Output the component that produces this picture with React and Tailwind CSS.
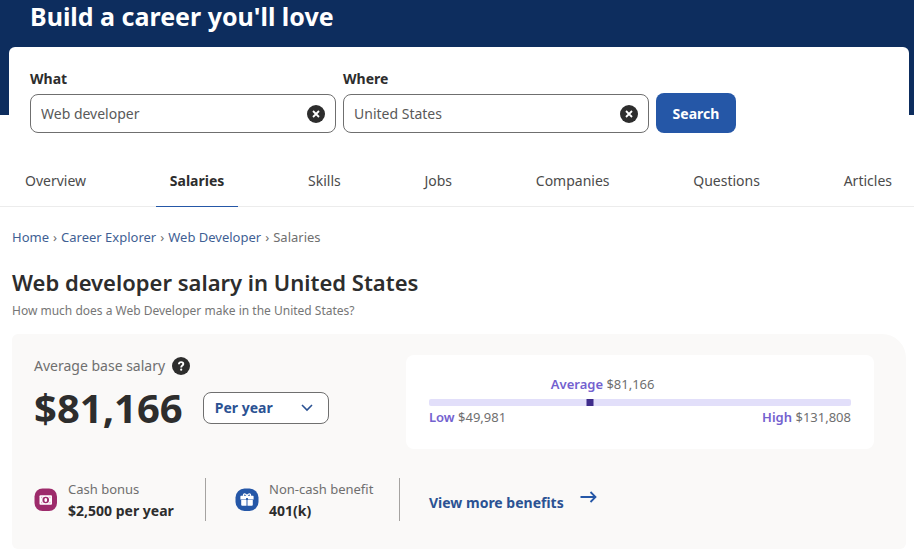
import { useState } from "react";
import clsx from "clsx";

const tabs = ["Overview", "Salaries", "Skills", "Jobs", "Companies", "Questions", "Articles"];
const crumbs = ["Home", "Career Explorer", "Web Developer"];
const range = { low: 49981, average: 81166, high: 131808 };

const money = (value) => `$${value.toLocaleString("en-US")}`;

const ClearIcon = () => (
  <svg viewBox="0 0 18 18" className="size-[18px]" aria-hidden="true">
    <circle cx="9" cy="9" r="9" fill="#2d2d2d" />
    <path d="M6 6l6 6M12 6l-6 6" stroke="#fff" strokeWidth="1.8" />
  </svg>
);

const HelpIcon = () => (
  <svg viewBox="0 0 18 18" className="size-[18px]" aria-hidden="true">
    <circle cx="9" cy="9" r="9" fill="#2d2d2d" />
    <path
      d="M6.9 7.2c0-1.3 0.9-2.1 2.2-2.1s2.2 0.8 2.2 1.9c0 1.6-2.1 1.5-2.1 3.4"
      fill="none"
      stroke="#fff"
      strokeWidth="1.9"
    />
    <circle cx="9.2" cy="12.7" r="1.1" fill="#fff" />
  </svg>
);

const CashIcon = () => (
  <svg viewBox="0 0 24 24" className="size-6 shrink-0" aria-hidden="true">
    <rect x="0.5" y="0.5" width="22.5" height="22.5" rx="8" fill="#9d2b6b" />
    <rect x="5.5" y="7.3" width="12.5" height="9.4" rx="1" fill="#fff" />
    <path d="M7 8.8h2L7 10.6zM16.5 8.8h-2l2 1.8zM7 15.2h2l-2-1.8zM16.5 15.2h-2l2-1.8z" fill="#d9a9c4" />
    <circle cx="11.75" cy="12" r="3.3" fill="#9d2b6b" />
    <ellipse cx="11.75" cy="12" rx="1.4" ry="1.9" fill="#fff" />
  </svg>
);

const GiftIcon = () => (
  <svg viewBox="0 0 24 24" className="size-6 shrink-0" aria-hidden="true">
    <rect x="0.5" y="0.5" width="23" height="22.5" rx="9" fill="#2557a7" />
    <path
      d="M12 8C11.5 6.2 10.5 5.8 9.6 5.8S8.200 6.800 8.500 8M12 8c0.500-1.800 1.500-2.200 2.400-2.200s1.400 1 1.100 2.200"
      fill="none"
      stroke="#fff"
      strokeWidth="1.2"
    />
    <path d="M6 7.8h12a0.600 0.600 0 0 1 0.600 0.600v3h-5.700v-1.300h-1.800v1.300H5.400v-3A0.600 0.600 0 0 1 6 7.800z" fill="#fff" />
    <path d="M6.200 12.100h5.300v5.700H7.200a1 1 0 0 1-1-1zM12.500 12.100h5.300v4.700a1 1 0 0 1-1 1h-4.300z" fill="#fff" />
  </svg>
);

const SearchField = ({ id, label, value, onChange }) => (
  <div className="w-[306px]">
    <label htmlFor={id} className="block text-sm leading-5 font-bold">
      {label}
    </label>
    <div className="mt-[5px] flex h-[39px] items-center rounded-lg border border-[#6f6f6f] px-[10px]">
      <input
        id={id}
        type="text"
        value={value}
        onChange={(e) => onChange(e.target.value)}
        className="min-w-0 flex-1 text-sm text-[#595959] outline-none"
      />
      <button type="button" aria-label={`Clear ${label}`} onClick={() => onChange("")}>
        <ClearIcon />
      </button>
    </div>
  </div>
);

const Benefit = ({ icon, label, value }) => (
  <div className="flex items-center gap-[10px] border-r border-[#a5a3a1]">
    {icon}
    <div>
      <p className="text-[13px] leading-[22px] text-[#6f6f6f]">{label}</p>
      <p className="text-sm leading-[21px] font-bold">{value}</p>
    </div>
  </div>
);

const SalaryRange = () => {
  const position = ((range.average - range.low) / (range.high - range.low)) * 100;

  return (
    <div className="rounded-lg bg-white px-[23px] pt-[19px] pb-[22px] text-[13px] leading-5 text-[#6f6f6f]">
      <p style={{ marginLeft: `calc(${position}% - 39px)` }}>
        <b className="font-semibold text-[#7361cf]">Average</b> {money(range.average)}
      </p>
      <div className="relative mt-[5px] h-[7px] rounded-xs bg-[#e2dffa]">
        <span className="absolute size-[7px] -translate-x-1/2 bg-[#3f2d8c]" style={{ left: `${position}%` }} />
      </div>
      <div className="mt-px flex justify-between">
        <p>
          <b className="font-semibold text-[#7361cf]">Low</b> {money(range.low)}
        </p>
        <p>
          <b className="font-semibold text-[#7361cf]">High</b> {money(range.high)}
        </p>
      </div>
    </div>
  );
};

const App = () => {
  const [what, setWhat] = useState("Web developer");
  const [where, setWhere] = useState("United States");
  const [activeTab, setActiveTab] = useState("Salaries");
  const [period, setPeriod] = useState("Per year");

  return (
    <div className="min-h-screen bg-white font-['Noto_Sans',sans-serif] text-[#2d2d2d]">
      <header className="bg-[#0d2d5e] px-[30px] pb-[83px]">
        <h1 className="text-[25px] leading-8 font-bold text-white">Build a career you'll love</h1>
      </header>

      <form
        className="relative mr-[5px] ml-[9px] -mt-[68px] flex items-end gap-[7px] rounded-t-md bg-white px-[21px] pt-[22px]"
        onSubmit={(e) => e.preventDefault()}
      >
        <SearchField id="what" label="What" value={what} onChange={setWhat} />
        <SearchField id="where" label="Where" value={where} onChange={setWhere} />
        <button type="submit" className="h-10 w-20 rounded-lg bg-[#2557a7] pt-px text-sm font-bold text-white">
          Search
        </button>
      </form>

      <nav className="mt-[22px] flex justify-between border-b border-[#ececec] pr-2 pl-[11px]">
        {tabs.map((tab) => (
          <a
            key={tab}
            href={`#${tab.toLowerCase()}`}
            onClick={() => setActiveTab(tab)}
            className={clsx(
              "-mb-px border-b px-[14px] pt-4 pb-[15px] text-sm leading-5",
              tab === activeTab ? "border-[#2557a7] font-bold" : "border-transparent text-[#4b4b4b]"
            )}
          >
            {tab}
          </a>
        ))}
      </nav>

      <main className="pr-2 pl-3">
        <nav aria-label="Breadcrumb" className="mt-5 flex gap-1 text-[13px] leading-5 text-[#6f6f6f]">
          {crumbs.map((crumb) => (
            <span key={crumb} className="flex gap-1">
              <a href="#" className="text-[#3f5f94]">
                {crumb}
              </a>
              <span>›</span>
            </span>
          ))}
          <span>Salaries</span>
        </nav>

        <h2 className="mt-[19px] text-[22px] leading-8 font-semibold">Web developer salary in United States</h2>
        <p className="mt-[3px] text-xs leading-5 text-[#767676]">
          How much does a Web Developer make in the United States?
        </p>

        <section className="mt-[13px] grid grid-cols-[372px_1fr] gap-y-[29px] rounded-md rounded-tr-3xl bg-[#faf9f8] pt-[21px] pr-8 pb-7 pl-[22px]">
          <div>
            <div className="flex items-center gap-[7px] text-sm leading-[22px] text-[#6f6f6f]">
              Average base salary
              <button type="button" aria-label="About average base salary">
                <HelpIcon />
              </button>
            </div>
            <div className="mt-2 flex items-center gap-5">
              <p className="text-[40px] leading-[46px] font-bold">{money(range.average)}</p>
              <div className="relative">
                <select
                  aria-label="Pay period"
                  value={period}
                  onChange={(e) => setPeriod(e.target.value)}
                  className="h-8 w-[126px] appearance-none rounded-lg border border-[#6f6f6f] bg-white pl-[11px] text-sm font-bold text-[#2b5293]"
                >
                  <option>Per year</option>
                  <option>Per month</option>
                  <option>Per hour</option>
                </select>
                <svg
                  viewBox="0 0 12 8"
                  className="pointer-events-none absolute top-3 right-4 h-2 w-3"
                  fill="none"
                  stroke="#2b5293"
                  strokeWidth="1.6"
                >
                  <path d="M1 1l5 5 5-5" />
                </svg>
              </div>
            </div>
          </div>

          <SalaryRange />

          <div className="grid grid-cols-[172px_165px] gap-x-[29px]">
            <Benefit icon={<CashIcon />} label="Cash bonus" value="$2,500 per year" />
            <Benefit icon={<GiftIcon />} label="Non-cash benefit" value="401(k)" />
          </div>

          <a href="#benefits" className="flex items-center gap-4 pt-[6px] pl-[23px] text-sm font-bold text-[#2b5293]">
            View more benefits
            <svg viewBox="0 0 17 12" className="mb-3 h-3 w-[17px]" fill="none" stroke="#2557a7" strokeWidth="1.8">
              <path d="M0.5 6h15M10.5 1l5 5-5 5" />
            </svg>
          </a>
        </section>
      </main>
    </div>
  );
};

export default App;
